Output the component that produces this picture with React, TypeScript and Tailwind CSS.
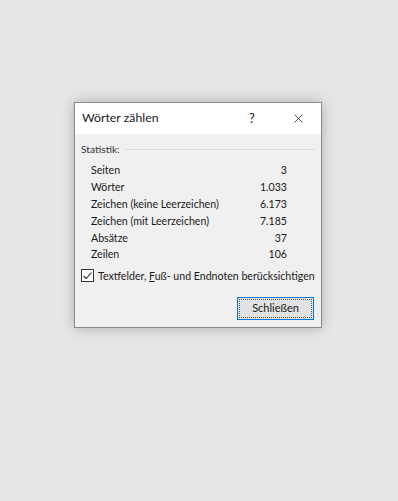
import { X } from 'lucide-react';

const stats: [string, string][] = [
  ['Seiten', '3'],
  ['Wörter', '1.033'],
  ['Zeichen (keine Leerzeichen)', '6.173'],
  ['Zeichen (mit Leerzeichen)', '7.185'],
  ['Absätze', '37'],
  ['Zeilen', '106'],
];

export default function App() {
  return (
    <div
      className="w-[398px] h-[501px] bg-[#e6e6e6] pt-[102px] pl-[74px] text-[#1a1a1a]"
      style={{ fontFamily: 'Lato, "Noto Sans", sans-serif' }}
    >
      <div className="w-[248px] h-[226px] bg-[#f0f0f0] border border-[#8a8a8a] shadow-[0_0_12px_rgba(0,0,0,0.25)] flex flex-col">
        {/* Title bar */}
        <div className="h-[31px] bg-white flex items-center pl-[7px] shrink-0">
          <span className="text-[12.3px] flex-1">Wörter zählen</span>
          <span className="text-[13px] w-[46px] text-center">?</span>
          <span className="w-[46px] flex justify-center">
            <X size={15} strokeWidth={1.2} />
          </span>
        </div>

        {/* Body */}
        <div className="px-[6px] pt-[8px] flex flex-col text-[10.6px] leading-[14px] whitespace-nowrap">
          <div className="flex items-center gap-[5px] h-[14px] text-[10.2px] text-[#333]">
            <span>Statistik:</span>
            <div className="flex-1 h-px bg-[#dcdcdc]" />
          </div>
          <div className="flex flex-col pl-[10px] pr-[28px] mt-[6px]">
            {stats.map(([label, value]) => (
              <div key={label} className="h-[16.8px] flex items-center justify-between">
                <span>{label}</span>
                <span>{value}</span>
              </div>
            ))}
          </div>

          <div className="flex items-center gap-[4px] mt-[6px] h-[14px]">
            <div className="w-[13px] h-[13px] border border-[#333] bg-white flex items-center justify-center shrink-0">
              <svg width="11" height="11" viewBox="0 0 11 11">
                <path d="M1.5 5.8 L4.2 8.5 L9.5 2.5" fill="none" stroke="#222" strokeWidth="1.1" />
              </svg>
            </div>
            <span className="text-[10.6px]">
              Textfelder, <span className="underline">F</span>uß- und Endnoten berücksichtigen
            </span>
          </div>

          <div className="flex justify-end mt-[14px] pr-[1px]">
            <div className="w-[77px] h-[23px] border border-[#0078d7] bg-[#e1e1e1] p-[1px]">
              <div className="w-full h-full border border-dotted border-[#555] flex items-center justify-center text-[11px]">
                Schließen
              </div>
            </div>
          </div>
        </div>
      </div>
    </div>
  );
}
